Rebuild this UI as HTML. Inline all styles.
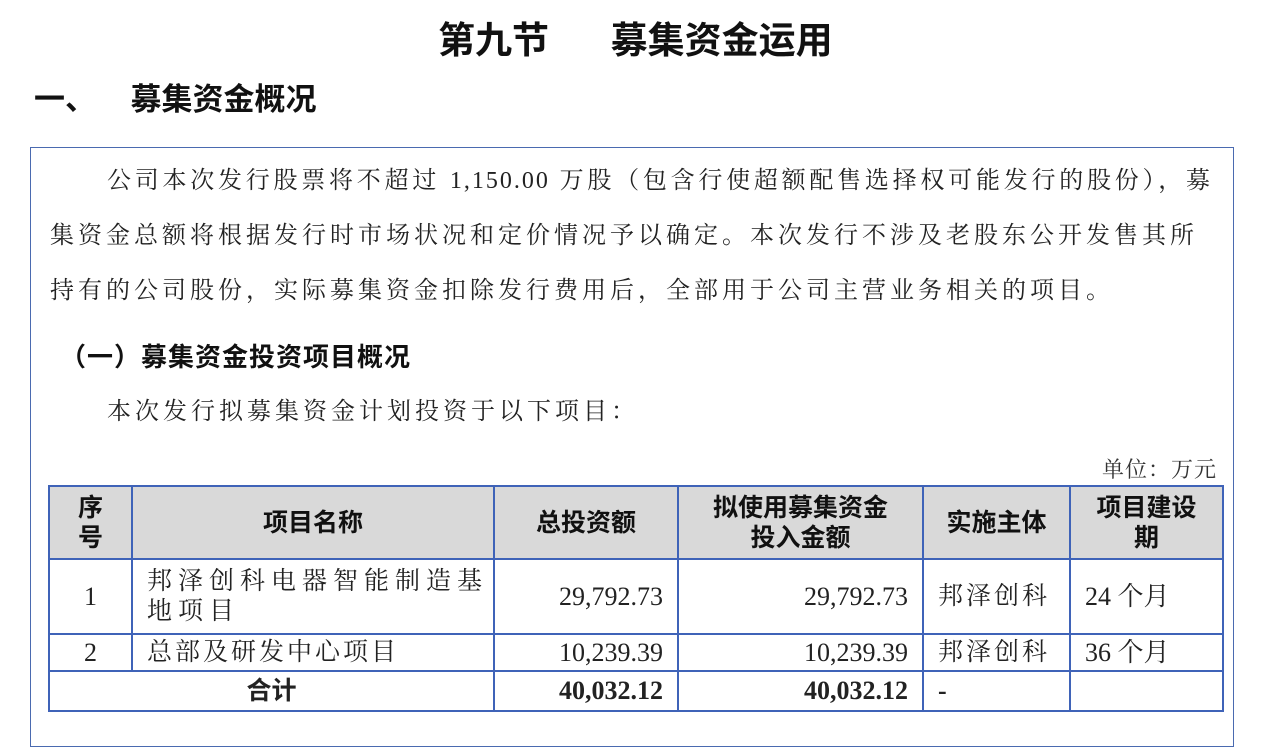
<!DOCTYPE html>
<html><head><meta charset="utf-8"><style>
body{margin:0;width:1264px;height:724px;background:#fff;position:relative;overflow:hidden;font-family:"Liberation Serif","Noto Serif CJK SC","Noto Sans CJK SC",serif;color:#222}
.a{position:absolute;white-space:nowrap}
.b{font-family:"Liberation Sans","Noto Sans CJK SC",sans-serif;font-weight:bold;color:#111}
.box{position:absolute;left:30px;top:147px;width:1204px;height:600px;border:1.5px solid #4a6ab0;box-sizing:border-box}
.t{font-size:24px;letter-spacing:4px}
table{position:absolute;left:48px;top:485px;border-collapse:collapse;font-size:26px}
td{border:2px solid #3f63b8;padding:0;line-height:30px}
.h td{background:#d9d9d9;text-align:center;font-family:"Liberation Sans","Noto Sans CJK SC",sans-serif;font-weight:bold;font-size:25px;color:#111}
.r{text-align:right;padding-right:14px}
</style></head><body>
<div class="a b" style="left:438px;top:10px;font-size:37px;">第九节&nbsp;&nbsp;&nbsp;&nbsp;&nbsp;&nbsp;募集资金运用</div>
<div class="a b" style="left:34px;top:74px;font-size:31px;">一、&nbsp;&nbsp;&nbsp;&nbsp;募集资金概况</div>
<div class="box"></div>
<div class="a t" style="left:107px;top:160px;width:1105px;text-align:justify;text-align-last:justify;letter-spacing:2px">公司本次发行股票将不超过 1,150.00 万股（包含行使超额配售选择权可能发行的股份），募</div>
<div class="a t" style="left:50px;top:215px">集资金总额将根据发行时市场状况和定价情况予以确定。本次发行不涉及老股东公开发售其所</div>
<div class="a t" style="left:50px;top:270px">持有的公司股份，实际募集资金扣除发行费用后，全部用于公司主营业务相关的项目。</div>
<div class="a b" style="left:60px;top:337px;font-size:26px;letter-spacing:1px">（一）募集资金投资项目概况</div>
<div class="a t" style="left:107px;top:391px">本次发行拟募集资金计划投资于以下项目：</div>
<div class="a" style="left:1102px;top:453px;font-size:22px;letter-spacing:1px;color:#333">单位：万元</div>
<table>
<tr class="h" style="height:73px"><td style="width:81px">序<br>号</td><td style="width:360px">项目名称</td><td style="width:182px">总投资额</td><td style="width:243px">拟使用募集资金<br>投入金额</td><td style="width:145px">实施主体</td><td style="width:151px">项目建设<br>期</td></tr>
<tr style="height:75px"><td style="text-align:center">1</td><td style="padding-left:14px;letter-spacing:6px;font-size:25px">邦泽创科电器智能制造基<br>地项目</td><td class="r">29,792.73</td><td class="r">29,792.73</td><td style="padding-left:14px;letter-spacing:3px;font-size:25px">邦泽创科</td><td style="padding-left:14px">24 个月</td></tr>
<tr style="height:37px"><td style="text-align:center">2</td><td style="padding-left:14px;letter-spacing:3px;font-size:25px">总部及研发中心项目</td><td class="r">10,239.39</td><td class="r">10,239.39</td><td style="padding-left:14px;letter-spacing:3px;font-size:25px">邦泽创科</td><td style="padding-left:14px">36 个月</td></tr>
<tr style="height:40px;font-weight:bold"><td colspan="2" style="text-align:center;font-family:'Liberation Sans','Noto Sans CJK SC',sans-serif;font-size:25px">合计</td><td class="r">40,032.12</td><td class="r">40,032.12</td><td style="padding-left:14px">-</td><td></td></tr>
</table>
</body></html>
